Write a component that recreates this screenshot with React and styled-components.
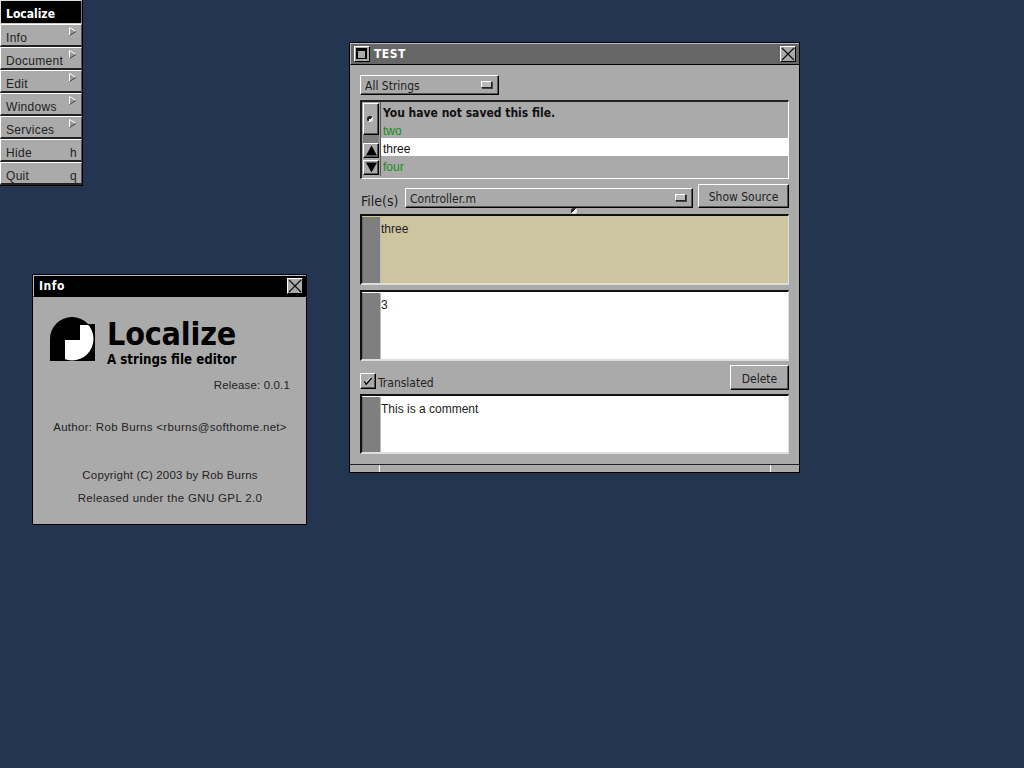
import React from "react";
import styled, { createGlobalStyle } from "styled-components";

const GlobalStyle = createGlobalStyle`
  html, body {
    margin: 0;
    padding: 0;
    background: #233551;
  }
  * {
    box-sizing: border-box;
  }
`;

const Desktop = styled.div`
  position: relative;
  width: 1024px;
  height: 768px;
  overflow: hidden;
  background: #233551;
  font-family: "Liberation Sans", Arial, sans-serif;
  font-size: 12px;
  color: #111;
`;

/* ---- app menu ---- */

const Menu = styled.nav`
  position: absolute;
  left: 0;
  top: 0;
  width: 83px;
  display: flex;
  flex-direction: column;
  background: #000;
  border-right: 1px solid #000;
  border-bottom: 1px solid #000;
`;

const MenuTitle = styled.div`
  height: 24px;
  padding: 3px 0 0 5px;
  display: flex;
  align-items: center;
  background: #000;
  border-top: 1px solid #ddd;
  border-left: 1px solid #ddd;
  border-right: 1px solid #777;
  border-bottom: 1px solid #ccc;
  color: #fff;
  font-family: "DejaVu Sans", sans-serif;
  font-stretch: condensed;
  font-weight: 700;
  font-size: 12px;
`;

const MenuItem = styled.div`
  height: 23px;
  padding: 5px 3px 0 5px;
  display: flex;
  align-items: center;
  justify-content: space-between;
  background: #aaa;
  border-top: 1px solid #fff;
  border-left: 1px solid #fff;
  border-right: 1px solid #555;
  border-bottom: 2px solid #222;
  letter-spacing: 0.3px;
  color: #222;
`;

const Arrow = styled.svg`
  width: 8px;
  height: 9px;
  margin-top: -12px;
  margin-right: 1px;
`;

const KeyHint = styled.span`
  margin-right: 1px;
  font-size: 12px;
`;

const MenuArrow = () => (
  <Arrow viewBox="0 0 8 9">
    <path d="M0.5 0.5 L7 4.5 L0.5 8.5 Z" fill="#999" />
    <path d="M0.5 8.5 L0.5 0.5 L7 4.5" fill="none" stroke="#fff" strokeWidth="1" />
    <path d="M0.5 8.5 L7 4.5" fill="none" stroke="#444" strokeWidth="1" />
  </Arrow>
);

/* ---- windows ---- */

const Window = styled.section`
  position: absolute;
  left: ${({ $x }) => $x}px;
  top: ${({ $y }) => $y}px;
  width: ${({ $w }) => $w}px;
  height: ${({ $h }) => $h}px;
  display: flex;
  flex-direction: column;
  background: #aaa;
  border: 1px solid #000;
`;

const TitleBar = styled.header`
  height: 22px;
  flex: none;
  display: flex;
  align-items: center;
  padding: 0 3px;
  background: ${({ $active }) => ($active ? "#000" : "#666")};
  border-top: 1px solid #bbb;
  border-left: 1px solid #bbb;
  border-bottom: 1px solid #000;
`;

const TitleText = styled.span`
  flex: 1;
  padding-left: ${({ $pad }) => $pad}px;
  color: #fff;
  font-family: "DejaVu Sans", sans-serif;
  font-weight: 700;
  font-stretch: condensed;
  font-size: 12px;
  letter-spacing: 0.5px;
`;

const TitleButton = styled.button`
  width: 16px;
  height: 16px;
  padding: 0;
  display: flex;
  align-items: center;
  justify-content: center;
  background: #aaa;
  border: 1px solid;
  border-color: #fff #000 #000 #fff;
`;

const TitleGlyph = styled.svg`
  width: 14px;
  height: 14px;
  display: block;
`;

const WindowBody = styled.div`
  flex: 1;
  display: flex;
  flex-direction: column;
  padding: 10px 10px 0;
`;

const ResizeBar = styled.footer`
  height: 8px;
  flex: none;
  display: flex;
  background: #aaa;
  border-top: 1px solid #222;
`;

const ResizeGrip = styled.div`
  flex: ${({ $grow }) => ($grow ? 1 : "none")};
  width: ${({ $w }) => $w}px;
  border-left: ${({ $rule }) => ($rule ? "1px solid #fff" : "none")};
`;

/* ---- controls ---- */

const Bevel = styled.div`
  background: #aaa;
  border: 1px solid;
  border-color: #fff #000 #000 #fff;
  box-shadow: inset -1px -1px 0 #555;
`;

const PopUp = styled(Bevel)`
  width: ${({ $w }) => ($w ? `${$w}px` : "auto")};
  flex: ${({ $w }) => ($w ? "none" : 1)};
  height: 20px;
  display: flex;
  align-items: center;
  justify-content: space-between;
  padding: 1px 6px 0 4px;
  font-family: "DejaVu Sans", sans-serif;
  font-stretch: condensed;
  font-size: 12px;
  color: #222;
`;

const PopUpMark = styled.span`
  width: 11px;
  height: 7px;
  margin-top: -2px;
  background: #bbb;
  border: 1px solid;
  border-color: #fff #222 #222 #fff;
  box-shadow: 1px 1px 0 #444;
`;

const ListBox = styled.div`
  height: 79px;
  margin-top: 5px;
  display: flex;
  background: #aaa;
  border-top: 2px solid #222;
  border-left: 2px solid #222;
  border-right: 1px solid #fff;
  border-bottom: 1px solid #fff;
`;

const ScrollStrip = styled.div`
  width: 19px;
  height: 74px;
  flex: none;
  display: flex;
  flex-direction: column;
  padding-left: 1px;
  padding-right: 1px;
  border-right: 1px solid #555;
`;

const ScrollKnob = styled(Bevel)`
  height: 32px;
  flex: none;
  margin-top: 1px;
  display: flex;
  align-items: center;
  justify-content: center;
  padding-right: 2px;
`;

const Dimple = styled.span`
  width: 6px;
  height: 6px;
  border-radius: 50%;
  background: linear-gradient(135deg, #222 50%, #eee 50%);
`;

const ScrollTrack = styled.div`
  height: 8px;
  flex: none;
  background: #7f7f7f;
`;

const ScrollButton = styled(Bevel)`
  height: 15px;
  flex: none;
  margin-bottom: 2px;
  display: flex;
  align-items: center;
  justify-content: center;
`;

const ScrollGlyph = styled.svg`
  width: 11px;
  height: 11px;
  display: block;
`;

const Rows = styled.div`
  flex: 1;
  display: flex;
  flex-direction: column;
  padding-top: 1px;
`;

const Row = styled.div`
  height: ${({ $h }) => $h}px;
  flex: none;
  padding: 3px 0 0 2px;
  line-height: 16px;
  background: ${({ $selected }) => ($selected ? "#fff" : "transparent")};
  color: ${({ $tone }) => ($tone === "green" ? "#1c8a1c" : "#111")};
`;

const NoticeRow = styled(Row)`
  padding-top: 2px;
  font-family: "DejaVu Sans", sans-serif;
  font-stretch: condensed;
  font-weight: 700;
  font-size: 12px;
`;

const FileRow = styled.div`
  height: 24px;
  margin-top: 5px;
  display: flex;
  align-items: flex-end;
  gap: 5px;
`;

const FileLabel = styled.label`
  width: 40px;
  padding-left: 1px;
  margin-bottom: -2px;
  font-family: "DejaVu Sans", sans-serif;
  font-stretch: condensed;
  font-size: 14px;
  line-height: 17px;
  color: #222;
`;

const PushButton = styled(Bevel)`
  width: ${({ $w }) => $w}px;
  height: ${({ $h }) => $h}px;
  flex: none;
  padding-top: 2px;
  display: flex;
  align-items: center;
  justify-content: center;
  font-family: "DejaVu Sans", sans-serif;
  font-stretch: condensed;
  font-size: 12px;
  color: #222;
`;

const TextPane = styled.div`
  height: ${({ $h }) => $h}px;
  margin-top: ${({ $gap }) => $gap}px;
  flex: none;
  display: flex;
  background: ${({ $bg }) => $bg};
  border-top: 2px solid #111;
  border-left: 2px solid #111;
  border-right: 1px solid #ddd;
  border-bottom: 2px solid #ddd;
`;

const PaneGutter = styled.div`
  width: 19px;
  flex: none;
  margin-top: 1px;
  background: #7f7f7f;
  border-left: 1px solid #666;
  border-right: 1px solid #bbb;
`;

const PaneText = styled.div`
  flex: 1;
  padding: 6px 0 0 0;
  color: #222;
  line-height: 14px;
`;

const CheckRow = styled.div`
  height: 25px;
  margin-top: 4px;
  display: flex;
  align-items: flex-end;
  justify-content: space-between;
`;

const CheckLabel = styled.div`
  display: flex;
  align-items: center;
  gap: 2px;
  font-family: "DejaVu Sans", sans-serif;
  font-stretch: condensed;
  font-size: 12px;
  color: #222;
`;

const CheckText = styled.span`
  padding-top: 5px;
`;

const CheckBox = styled(Bevel)`
  width: 16px;
  height: 16px;
  display: flex;
  align-items: center;
  justify-content: center;
`;

const CheckGlyph = styled.svg`
  width: 12px;
  height: 12px;
  display: block;
`;

const SplitHandle = styled.span`
  position: absolute;
  left: 221px;
  top: 165px;
  width: 6px;
  height: 6px;
  border-radius: 50%;
  background: linear-gradient(135deg, #222 50%, #eee 50%);
`;

/* ---- info panel ---- */

const InfoBody = styled.div`
  flex: 1;
  display: flex;
  flex-direction: column;
  padding: 20px 16px 0 17px;
  color: #222;
`;

const Brand = styled.div`
  display: flex;
  gap: 12px;
`;

const Logo = styled.svg`
  width: 45px;
  height: 44px;
  flex: none;
`;

const BrandText = styled.div`
  display: flex;
  flex-direction: column;
`;

const AppName = styled.h1`
  margin: 0;
  font-family: "DejaVu Sans", sans-serif;
  font-stretch: condensed;
  font-weight: 700;
  font-size: 32px;
  line-height: 34px;
  letter-spacing: -0.2px;
  color: #000;
`;

const Tagline = styled.div`
  margin-top: 1px;
  font-family: "DejaVu Sans", sans-serif;
  font-stretch: condensed;
  font-weight: 700;
  font-size: 13.2px;
  line-height: 16px;
  color: #000;
`;

const InfoLine = styled.p`
  margin: ${({ $gap }) => $gap}px 0 0;
  line-height: 14px;
  font-size: 11.5px;
  letter-spacing: ${({ $track }) => $track}px;
  text-align: ${({ $align }) => $align || "center"};
`;

const CloseGlyph = () => (
  <TitleGlyph viewBox="0 0 14 14">
    <path d="M1 1 L13 13 M13 1 L1 13" stroke="#111" strokeWidth="1.2" fill="none" />
  </TitleGlyph>
);

const MiniGlyph = () => (
  <TitleGlyph viewBox="0 0 14 14">
    <path d="M1 1 H12 V12 H1 Z" fill="#000" />
    <rect x="3" y="4" width="7" height="7" fill="#aaa" />
  </TitleGlyph>
);

const menuItems = [
  { label: "Info", submenu: true },
  { label: "Document", submenu: true },
  { label: "Edit", submenu: true },
  { label: "Windows", submenu: true },
  { label: "Services", submenu: true },
  { label: "Hide", key: "h" },
  { label: "Quit", key: "q" },
];

export default function App() {
  return (
    <Desktop>
      <GlobalStyle />

      <Menu>
        <MenuTitle>Localize</MenuTitle>
        {menuItems.map((item) => (
          <MenuItem key={item.label}>
            <span>{item.label}</span>
            {item.submenu ? <MenuArrow /> : <KeyHint>{item.key}</KeyHint>}
          </MenuItem>
        ))}
      </Menu>

      <Window $x={349} $y={42} $w={451} $h={431}>
        <TitleBar>
          <TitleButton aria-label="Miniaturize">
            <MiniGlyph />
          </TitleButton>
          <TitleText $pad={4}>TEST</TitleText>
          <TitleButton aria-label="Close">
            <CloseGlyph />
          </TitleButton>
        </TitleBar>
        <WindowBody>
          <PopUp $w={139}>
            All Strings
            <PopUpMark />
          </PopUp>
          <ListBox>
            <ScrollStrip>
              <ScrollKnob>
                <Dimple />
              </ScrollKnob>
              <ScrollTrack />
              <ScrollButton>
                <ScrollGlyph viewBox="0 0 11 11">
                  <path d="M5.5 0.5 L11 10.5 H0 Z" fill="#000" />
                </ScrollGlyph>
              </ScrollButton>
              <ScrollButton>
                <ScrollGlyph viewBox="0 0 11 11">
                  <path d="M0 0.5 H11 L5.5 10.5 Z" fill="#000" />
                </ScrollGlyph>
              </ScrollButton>
            </ScrollStrip>
            <Rows>
              <NoticeRow $h={17}>You have not saved this file.</NoticeRow>
              <Row $h={18} $tone="green">two</Row>
              <Row $h={18} $selected>three</Row>
              <Row $h={18} $tone="green">four</Row>
            </Rows>
          </ListBox>
          <FileRow>
            <FileLabel>File(s)</FileLabel>
            <PopUp>
              Controller.m
              <PopUpMark />
            </PopUp>
            <PushButton $w={91} $h={24}>Show Source</PushButton>
          </FileRow>
          <TextPane $h={71} $gap={6} $bg="#cdc5a0">
            <PaneGutter />
            <PaneText>three</PaneText>
          </TextPane>
          <TextPane $h={71} $gap={5} $bg="#fff">
            <PaneGutter />
            <PaneText>3</PaneText>
          </TextPane>
          <CheckRow>
            <CheckLabel>
              <CheckBox>
                <CheckGlyph viewBox="0 0 12 12">
                  <path d="M2.8 9 L9 2.2" stroke="#fff" strokeWidth="1" fill="none" />
                  <path d="M2.3 6.3 L4 9 M3.7 9.7 L9.7 3" stroke="#000" strokeWidth="1.3" fill="none" />
                </CheckGlyph>
              </CheckBox>
              <CheckText>Translated</CheckText>
            </CheckLabel>
            <PushButton $w={59} $h={25}>Delete</PushButton>
          </CheckRow>
          <TextPane $h={60} $gap={4} $bg="#fff">
            <PaneGutter />
            <PaneText>This is a comment</PaneText>
          </TextPane>
        </WindowBody>
        <SplitHandle />
        <ResizeBar>
          <ResizeGrip $w={29} />
          <ResizeGrip $grow $rule />
          <ResizeGrip $w={29} $rule />
        </ResizeBar>
      </Window>

      <Window $x={32} $y={274} $w={275} $h={251}>
        <TitleBar $active>
          <TitleText $pad={2}>Info</TitleText>
          <TitleButton aria-label="Close">
            <CloseGlyph />
          </TitleButton>
        </TitleBar>
        <InfoBody>
          <Brand>
            <Logo viewBox="0 0 45 44">
              <defs>
                <clipPath id="logo-disc">
                  <circle cx="22" cy="22" r="21.5" />
                </clipPath>
              </defs>
              <rect x="22" y="7" width="23" height="37" fill="#000" />
              <rect x="0" y="22" width="22" height="22" fill="#000" />
              <circle cx="22" cy="22" r="22" fill="#000" />
              <path
                d="M30 8 H45 V44 H15 V23 H30 Z"
                fill="#fff"
                clipPath="url(#logo-disc)"
              />
            </Logo>
            <BrandText>
              <AppName>Localize</AppName>
              <Tagline>A strings file editor</Tagline>
            </BrandText>
          </Brand>
          <InfoLine $gap={10} $track={0.15} $align="right">Release: 0.0.1</InfoLine>
          <InfoLine $gap={28} $track={0.3}>Author: Rob Burns &lt;rburns@softhome.net&gt;</InfoLine>
          <InfoLine $gap={34} $track={0.17}>Copyright (C) 2003 by Rob Burns</InfoLine>
          <InfoLine $gap={9} $track={0.35}>Released under the GNU GPL 2.0</InfoLine>
        </InfoBody>
      </Window>
    </Desktop>
  );
}
